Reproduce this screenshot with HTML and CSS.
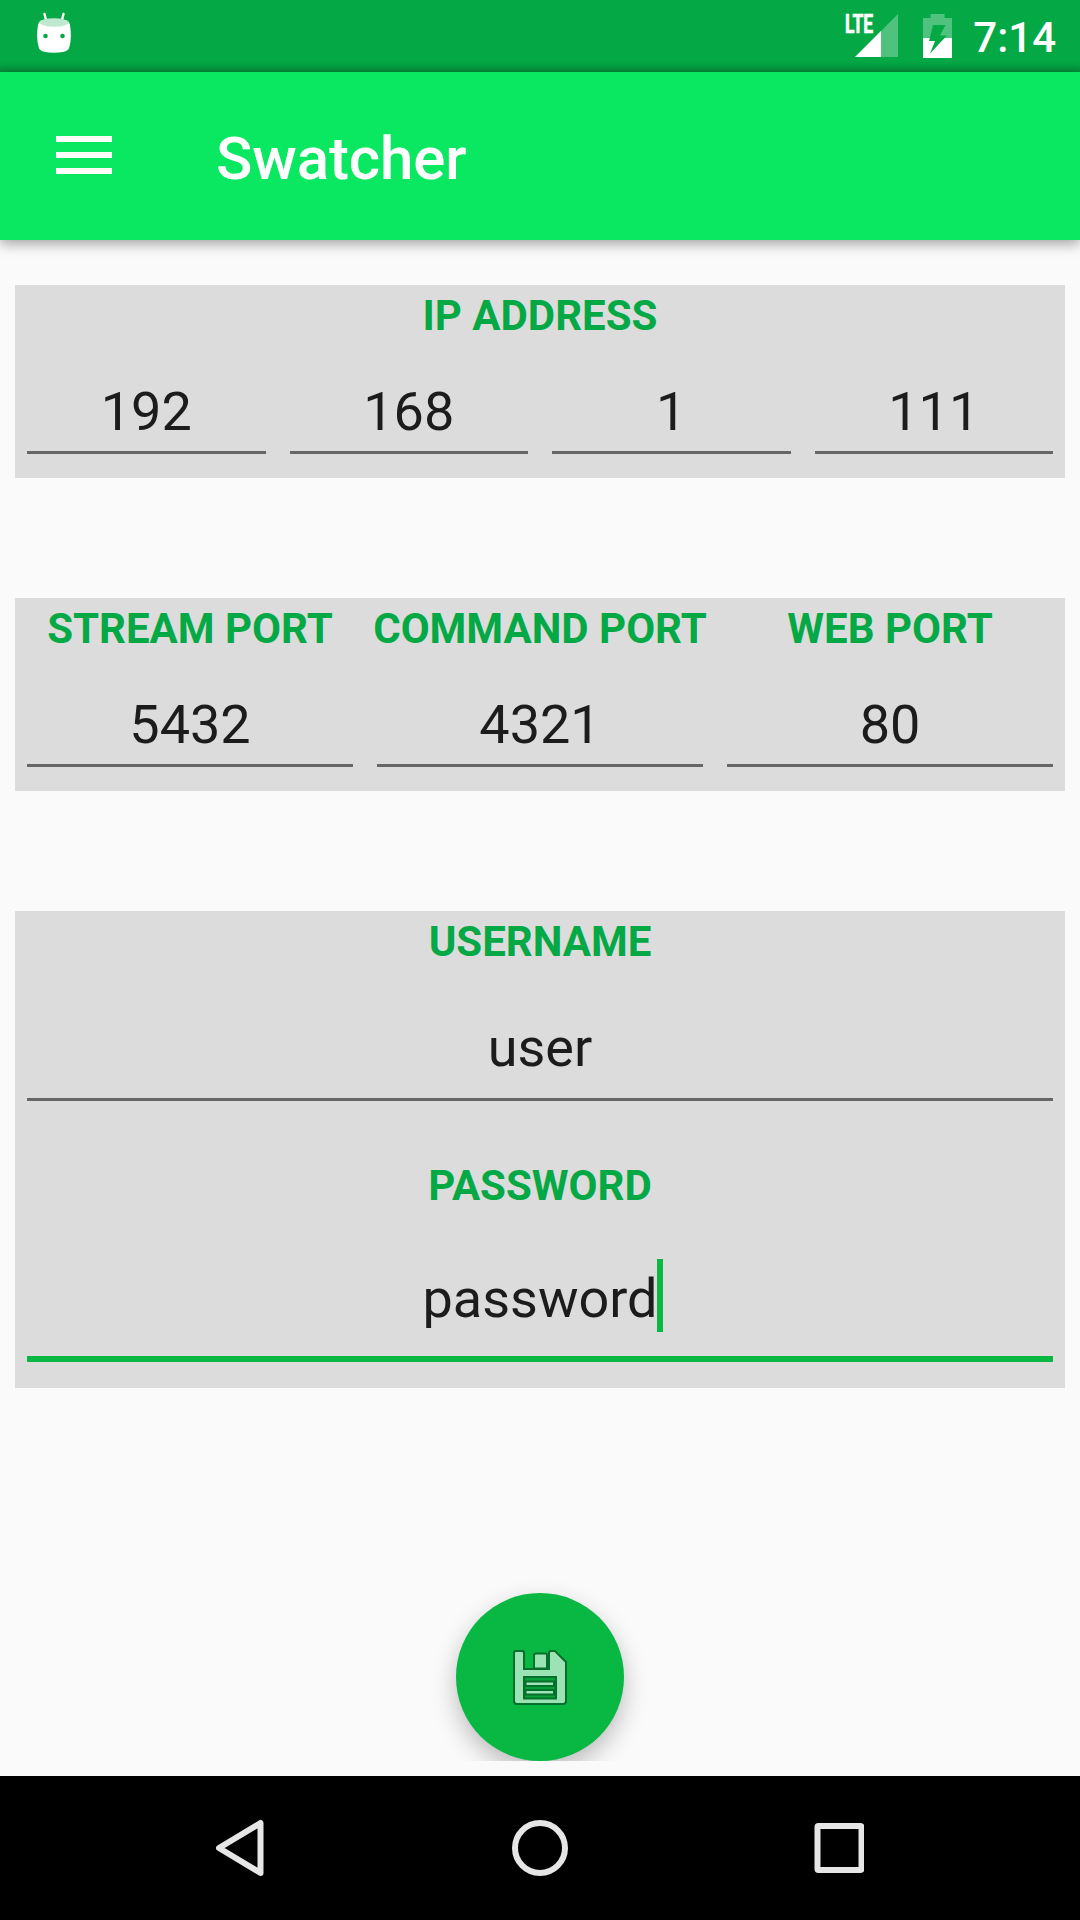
FILE: index.html
```html
<!DOCTYPE html>
<html lang="en">
<head>
<meta charset="utf-8">
<title>Swatcher</title>
<link rel="stylesheet" href="styles.css">
</head>
<body>
<div class="screen">
  <header class="status">
    <svg class="droid" width="36" height="44" viewBox="0 0 36 44">
      <path d="M8.500 2l2 8M27.500 2l-2 8" stroke="#fff" stroke-width="2.400" stroke-linecap="round"/>
      <path d="M2 13Q3 8 8 8Q18 6 28 8Q33 8 34 13Q36 25 33.500 34.500Q32.500 39 28 39.700Q18 42 8 39.700Q3.500 39 2.500 34.500Q0 25 2 13z" fill="#fff"/>
      <ellipse cx="18" cy="10.500" rx="14.500" ry="4.200" fill="#bfe9cf"/>
      <circle cx="9.500" cy="24" r="2.300" fill="#04a946"/><circle cx="26.500" cy="24" r="2.300" fill="#04a946"/>
    </svg>
    <div class="indicators">
      <div class="signal">
        <svg width="54" height="44" viewBox="0 0 54 44">
          <path d="M53 0V43H10z" fill="#fff" fill-opacity=".3"/>
          <path d="M36 17V43H10z" fill="#fff"/>
        </svg>
        <span class="lte">LTE</span>
      </div>
      <svg class="battery" width="29" height="44" viewBox="0 0 29 44">
        <path d="M0 4H7.500V0H21.500V4H29V24H0z" fill="#fff" fill-opacity=".3"/>
        <path d="M0 24H29V44H0z" fill="#fff"/>
        <path d="M10 11H22.500L17 21.500H24L7 39.500L12 27H6z" fill="#04a946"/>
      </svg>
      <span class="clock">7:14</span>
    </div>
  </header>
  <div class="appbar">
    <svg class="menu" width="56" height="38" viewBox="0 0 56 38"><path d="M0 0H56V6H0zM0 16H56V22H0zM0 32H56V38H0z" fill="#fff"/></svg>
    <h1 class="title">Swatcher</h1>
  </div>
  <main class="content">
    <section class="card">
      <div class="label">IP ADDRESS</div>
      <div class="row">
        <div class="field">192</div><div class="field">168</div><div class="field">1</div><div class="field">111</div>
      </div>
    </section>
    <section class="card">
      <div class="row">
        <div class="column"><div class="label">STREAM PORT</div><div class="field">5432</div></div>
        <div class="column"><div class="label">COMMAND PORT</div><div class="field">4321</div></div>
        <div class="column"><div class="label">WEB PORT</div><div class="field">80</div></div>
      </div>
    </section>
    <section class="card account">
      <div class="label">USERNAME</div>
      <div class="field tall">user</div>
      <div class="label second">PASSWORD</div>
      <div class="field tall focused"><span class="entry">password<i class="caret"></i></span></div>
    </section>
    <div class="actions">
      <div class="fab">
        <svg width="54" height="55" viewBox="0 0 54 55" stroke="#066f2b" stroke-width="2">
          <path d="M3 1H9Q11 1 11 3V19H36V3Q36 1 38 1H42L53 12V51Q53 54 50 54H4Q1 54 1 51V3Q1 1 3 1z" fill="#9be3b4"/>
          <path d="M23 3.500H32Q34 3.500 34 5V18.500H21V5Q21 3.500 23 3.500z" fill="#9be3b4"/>
          <path d="M11 27H43V48.500H11z" fill="#06a03b"/>
          <path d="M12.500 31.500H41V36H12.500zM12.500 40H41V44.500H12.500z" fill="#9be3b4"/>
        </svg>
      </div>
    </div>
  </main>
  <nav class="navbar">
    <svg width="50" height="58" viewBox="0 0 50 58"><path d="M44.500 4V54L3 29z"/></svg>
    <svg width="56" height="56" viewBox="0 0 56 56"><circle cx="28" cy="28" r="25"/></svg>
    <svg width="50" height="50" viewBox="0 0 50 50"><rect x="3.500" y="3" width="44" height="44" rx="1"/></svg>
  </nav>
</div>
</body>
</html>
```
FILE: styles.css
```css
* { box-sizing: border-box; }
body { margin: 0; font-family: Roboto, sans-serif; background: #fafafa; }
svg { display: block; }
.screen { width: 1080px; height: 1920px; display: flex; flex-direction: column; overflow: hidden; }
.status {
  height: 72px; flex: none; display: flex; justify-content: space-between; align-items: flex-start;
  padding: 12px 24px 0 36px;
  background: linear-gradient(#04a946 60px, #04a344 64px, #058a3a 72px);
}
.indicators { display: flex; align-items: flex-start; color: #fff; }
.signal { position: relative; margin: 2px 24px 0 0; }
.lte {
  position: absolute; left: 0; top: 1px; font-size: 25px; line-height: 20px; font-weight: 700;
  -webkit-text-stroke: .7px #fff; transform: scaleX(.7); transform-origin: 0 0;
}
.battery { margin-top: 2px; }
.clock { margin: 1px 0 0 21px; font-size: 42px; line-height: 50px; font-weight: 500; }
.appbar {
  position: relative; height: 168px; flex: none; display: flex; align-items: center; padding-left: 56px;
  background: #0ae862; box-shadow: 0 4px 12px rgba(0, 0, 0, .35);
}
.menu { margin-bottom: 3px; }
.title { margin: 6px 0 0 104px; color: #fff; font-size: 60px; line-height: 70px; font-weight: 500; letter-spacing: -.1px; }
.content { flex: 1; display: flex; flex-direction: column; padding: 45px 15px 0; }
.card { flex: none; height: 193px; margin-bottom: 120px; background: #dcdcdc; }
.account { height: 477px; margin-bottom: 0; }
.row { display: flex; }
.column { flex: 1; min-width: 0; }
.label { height: 56px; padding-top: 6px; text-align: center; white-space: nowrap; color: #04a946; font-size: 42px; line-height: 50px; font-weight: 700; }
.field {
  flex: 1; height: 113px; margin: 0 12px; padding-top: 39px; text-align: center;
  border-bottom: 3px solid #666; color: #1c1c1c; font-size: 54px; line-height: 64px;
}
.tall { height: 134px; padding-top: 49px; }
.second { margin-top: 54px; }
.focused { height: 151px; padding-top: 56px; border-bottom: 6px solid #08b843; }
.entry { position: relative; }
.caret { position: absolute; left: calc(100% - 1px); top: -8px; width: 6px; height: 73px; background: #08b843; }
.actions { display: flex; justify-content: center; align-items: flex-end; height: 373px; overflow: hidden; }
.fab {
  width: 168px; height: 168px; border-radius: 50%; display: flex; align-items: center; justify-content: center;
  background: #08b843; box-shadow: 0 10px 24px rgba(0, 0, 0, .25);
}
.navbar { height: 144px; flex: none; display: flex; align-items: center; justify-content: center; gap: 246px; background: #000; }
.navbar svg { fill: none; stroke: #e6e6e6; stroke-width: 6; stroke-linejoin: round; }
```
